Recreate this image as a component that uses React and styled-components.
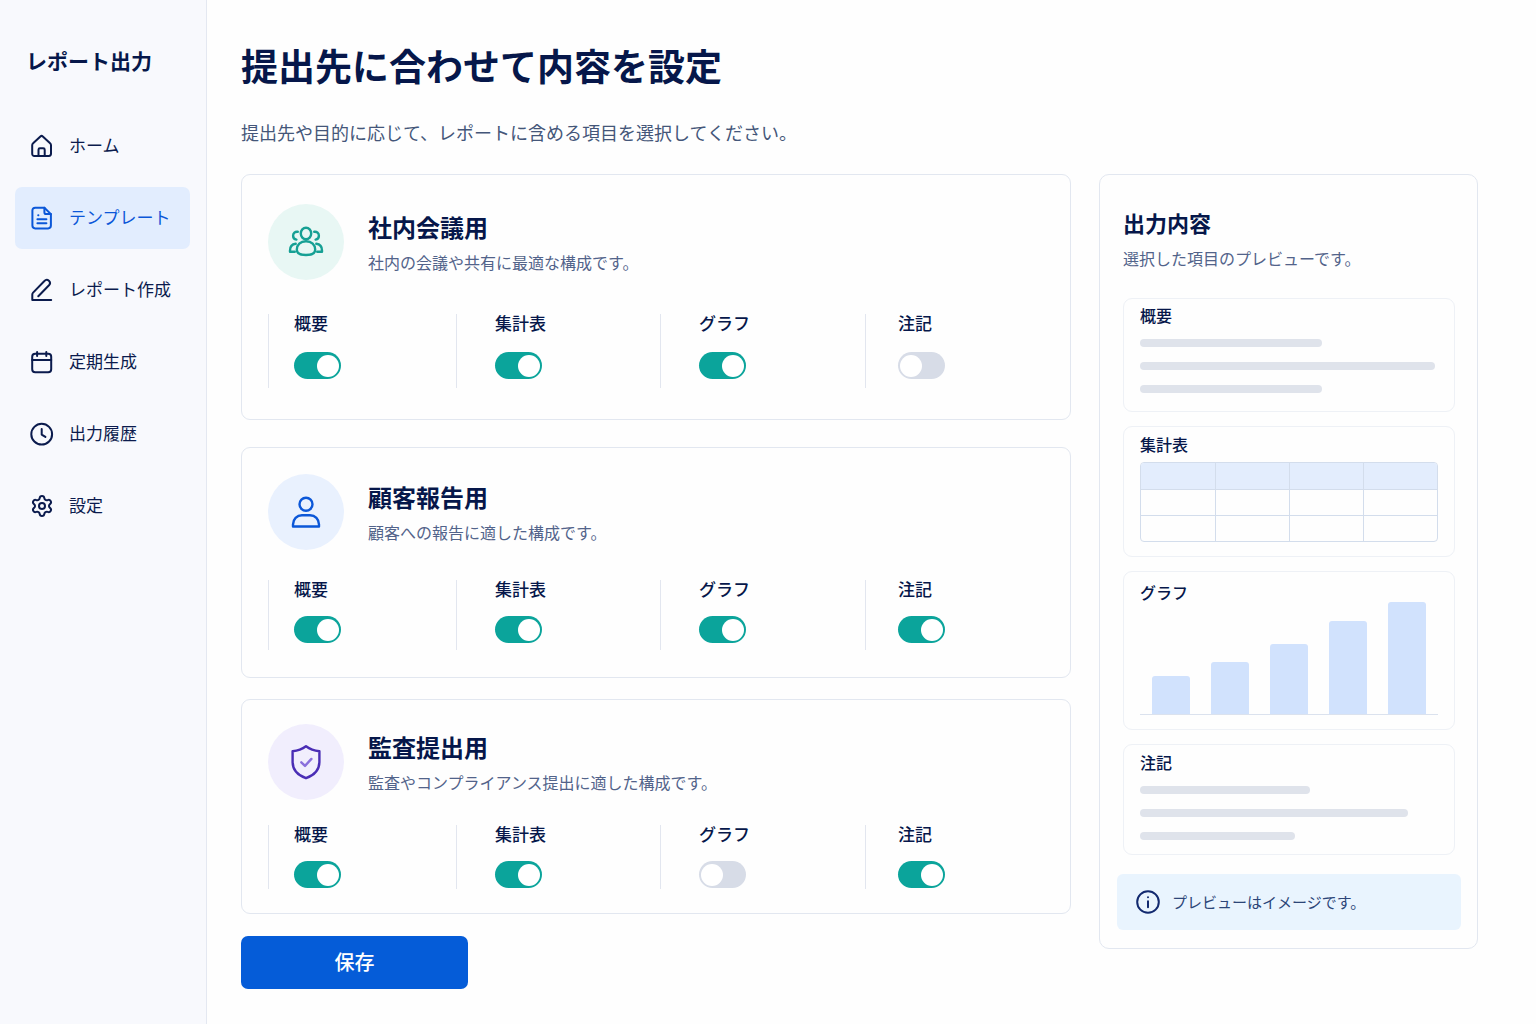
import React, { useState } from 'react';
import styled, { createGlobalStyle } from 'styled-components';
import { Settings } from 'lucide-react';

const GlobalStyle = createGlobalStyle`
  *, *::before, *::after {
    box-sizing: border-box;
  }

  body {
    margin: 0;
    background: #fefefe;
    color: #06174a;
    font-family: 'Noto Sans CJK JP', 'Noto Sans', sans-serif;
  }

  h1, h2, h3, p {
    margin: 0;
  }

  button, input {
    font: inherit;
  }
`;

const Layout = styled.div`
  display: flex;
  min-height: 100vh;
`;

const Sidebar = styled.aside`
  flex: 0 0 207px;
  padding: 44px 16px 32px 15px;
  background: #f8f9fd;
  border-right: 1px solid #e4e8f1;
`;

const Brand = styled.p`
  padding-left: 11px;
  font-size: 21px;
  line-height: 32px;
  font-weight: 700;
  white-space: nowrap;
`;

const Nav = styled.nav`
  display: flex;
  flex-direction: column;
  gap: 10px;
  margin-top: 39px;
`;

const NavLink = styled.a`
  display: flex;
  align-items: center;
  gap: 15px;
  height: 62px;
  padding-left: 15px;
  border-radius: 7px;
  font-size: 17px;
  line-height: 24px;
  white-space: nowrap;
  text-decoration: none;
  color: ${({ $active }) => ($active ? '#0b57d8' : '#0b1b4d')};
  background: ${({ $active }) => ($active ? '#e2edfe' : 'transparent')};

  svg {
    flex: none;
  }
`;

const NavText = styled.span`
  padding-bottom: 3px;
`;

const Main = styled.main`
  flex: 1;
  min-width: 0;
  padding: 38px 58px 32px 34px;
`;

const PageTitle = styled.h1`
  font-size: 37px;
  line-height: 54px;
  font-weight: 700;
`;

const PageLead = styled.p`
  margin-top: 26px;
  font-size: 18px;
  line-height: 28px;
  color: #445679;
`;

const Columns = styled.div`
  display: grid;
  grid-template-columns: minmax(0, 1fr) 379px;
  gap: 28px;
  align-items: start;
  margin-top: 28px;
`;

const TemplateForm = styled.form`
  display: flex;
  flex-direction: column;
`;

const density = {
  loose: { top: 29, gap: 34, row: 74, label: 20, bottom: 31, after: 27 },
  normal: { top: 26, gap: 30, row: 70, label: 18, bottom: 27, after: 21 },
  tight: { top: 24, gap: 25, row: 64, label: 18, bottom: 24, after: 22 },
};

const Card = styled.section`
  padding: ${({ $d }) => `${$d.top}px 26px ${$d.bottom}px`};
  margin-bottom: ${({ $d }) => $d.after}px;
  border: 1px solid #e2e7f0;
  border-radius: 9px;
`;

const CardHead = styled.div`
  display: flex;
  align-items: center;
  gap: 24px;
`;

const IconCircle = styled.div`
  display: grid;
  place-items: center;
  flex: none;
  width: 76px;
  height: 76px;
  border-radius: 50%;
  color: ${({ $color }) => $color};
  background: ${({ $background }) => $background};
`;

const CardTitle = styled.h2`
  margin-bottom: 7px;
  font-size: 24px;
  line-height: 32px;
  font-weight: 700;
`;

const Description = styled.p`
  font-size: 16px;
  line-height: 24px;
  color: #52638a;
`;

const Options = styled.div`
  display: grid;
  grid-template-columns: 188fr 204fr 205fr 179fr;
  margin-top: ${({ $d }) => $d.gap}px;
`;

const Option = styled.div`
  display: flex;
  flex-direction: column;
  align-items: flex-start;
  gap: ${({ $d }) => $d.label}px;
  height: ${({ $d }) => $d.row}px;
  border-left: 1px solid #e2e6ef;
  padding-left: 25px;

  &:nth-child(2),
  &:nth-child(3) {
    padding-left: 38px;
  }

  &:nth-child(4) {
    padding-left: 32px;
  }
`;

const OptionLabel = styled.label`
  font-size: 17px;
  line-height: 18px;
  font-weight: 500;
`;

const Switch = styled.input`
  appearance: none;
  display: flex;
  align-items: center;
  width: 47px;
  height: 27px;
  margin: 0;
  padding: 0 2px;
  border-radius: 14px;
  background: #d7dce7;
  cursor: pointer;

  &::before {
    content: '';
    width: 22px;
    height: 22px;
    border-radius: 50%;
    background: #fff;
  }

  &:checked {
    justify-content: flex-end;
    background: #0ba49b;
  }

  &:focus-visible {
    outline: 2px solid #0b57d8;
    outline-offset: 2px;
  }
`;

const SaveButton = styled.button`
  align-self: flex-start;
  width: 227px;
  height: 53px;
  padding: 0 0 2px;
  border: 0;
  border-radius: 7px;
  background: #055cd8;
  color: #fff;
  font-size: 20px;
  font-weight: 500;
  cursor: pointer;
`;

const Preview = styled.aside`
  padding: 30px 22px 18px 23px;
  border: 1px solid #e2e7f0;
  border-radius: 10px;
`;

const PreviewTitle = styled.h2`
  font-size: 22px;
  line-height: 34px;
  font-weight: 700;
`;

const PreviewLead = styled(Description)`
  margin-top: 7px;
`;

const Blocks = styled.div`
  display: flex;
  flex-direction: column;
  gap: 14px;
  margin-top: 28px;
`;

const Block = styled.section`
  padding: ${({ $top, $bottom }) => `${$top}px 16px ${$bottom}px`};
  border: 1px solid #eef1f6;
  border-radius: 9px;
`;

const BlockTitle = styled.h3`
  font-size: 16px;
  line-height: 20px;
  font-weight: 500;
`;

const Lines = styled.div`
  display: flex;
  flex-direction: column;
  gap: 15px;
  margin-top: 14px;
`;

const Line = styled.div`
  height: 8px;
  border-radius: 4px;
  background: #dfe3eb;
`;

const SampleTable = styled.table`
  width: 100%;
  margin-top: 8px;
  table-layout: fixed;
  border-collapse: separate;
  border-spacing: 0;
  border: 1px solid #d3ddec;
  border-radius: 4px;
  overflow: hidden;

  th, td {
    height: 26px;
    padding: 0;
  }

  th {
    background: #e3edfd;
  }

  td {
    border-top: 1px solid #d3ddec;
  }

  th + th, td + td {
    border-left: 1px solid #d3ddec;
  }
`;

const Chart = styled.div`
  display: flex;
  align-items: flex-end;
  justify-content: space-between;
  height: 113px;
  padding: 0 12px;
  border-bottom: 1px solid #dbe2ee;
`;

const Bar = styled.div`
  width: 38px;
  border-radius: 3px 3px 0 0;
  background: #d1e2fd;
`;

const Note = styled.div`
  display: flex;
  align-items: center;
  gap: 12px;
  height: 56px;
  margin: 19px -6px 0;
  padding-left: 19px;
  border-radius: 6px;
  background: #e9f4fe;
  color: #12296f;
`;

const NoteText = styled.p`
  font-size: 15px;
  line-height: 24px;
  color: #2c4578;
`;

const Icon = ({ size = 24, strokeWidth = 2, children }) => (
  <svg
    width={size}
    height={size}
    viewBox={`0 0 ${size} ${size}`}
    fill="none"
    stroke="currentColor"
    strokeWidth={strokeWidth}
    strokeLinecap="round"
    strokeLinejoin="round"
    aria-hidden="true"
  >
    {children}
  </svg>
);

const HomeIcon = () => (
  <Icon>
    <path d="M2.2 11.2c0-.8.3-1.4.9-1.9l7.3-6.9c.8-.7 1.6-.7 2.4 0l7.3 6.9c.6.5.9 1.1.9 1.9v8.6c0 1.3-.8 2.1-2.1 2.1H4.3c-1.3 0-2.1-.8-2.1-2.1z" />
    <path d="M8.5 21.9v-6.2c0-.9.6-1.4 1.4-1.4h3.4c.8 0 1.4.5 1.4 1.4v6.2" />
  </Icon>
);

const DocumentIcon = () => (
  <Icon>
    <path d="M14.4 1.8H5.2c-1.8 0-2.8 1-2.8 2.8v15c0 1.8 1 2.8 2.8 2.8h12.9c1.8 0 2.8-1 2.8-2.8V8.1z" />
    <path d="M14.4 1.8v4.4c0 1.2.7 1.9 1.9 1.9h4.6M8.2 9.2h.2M7.4 13.2h9M7.4 17.3h9" />
  </Icon>
);

const PenIcon = () => (
  <Icon>
    <path d="M21.2 22H2.3v-5.4c0-.8.2-1.4.8-2L14.4 3c1.300-1.400 3.100-1.500 4.500-.3 1.400 1.300 1.400 3.100.1 4.500L8.300 18.200" />
  </Icon>
);

const CalendarIcon = () => (
  <Icon>
    <rect x="2.2" y="3.8" width="19" height="18.400" rx="3" />
    <path d="M2.2 9.900h19M7.100 2v4M16.300 2v4" />
  </Icon>
);

const ClockIcon = () => (
  <Icon>
    <circle cx="11.7" cy="12.2" r="10.4" />
    <path d="M11.7 7v5.600l3.700 2.300" />
  </Icon>
);

const InfoIcon = () => (
  <Icon>
    <circle cx="12" cy="12" r="10.8" />
    <path d="M12 11.2v6M12 7.2v.1" />
  </Icon>
);

const GroupIcon = () => (
  <Icon size={36} strokeWidth={2.4}>
    <ellipse cx="18" cy="9.5" rx="5.2" ry="5.8" />
    <path d="M18 17.3c5.6 0 9.2 3.5 9.2 8.4 0 3.5-3.7 5.3-9.2 5.3s-9.2-1.8-9.2-5.3c0-4.9 3.6-8.4 9.2-8.4z" />
    <path d="M9.8 7.8C7 7.4 5.1 9.2 5.1 11.7c0 2 1.2 3.5 3.3 3.9M7.7 19.8C4.2 20.2 2 22.9 2 26.6v1.1h4.8" />
    <path d="M26.2 7.8c2.8-.4 4.7 1.4 4.7 3.9 0 2-1.2 3.5-3.3 3.9M28.3 19.8c3.5.4 5.7 3.1 5.7 6.8v1.1h-4.8" />
  </Icon>
);

const PersonIcon = () => (
  <Icon size={36} strokeWidth={2.4}>
    <circle cx="18" cy="10.3" r="6.5" />
    <path d="M5 32.500v-2c0-5.400 3.900-9.300 9-9.300h8c5.100 0 9 3.900 9 9.300v2z" />
  </Icon>
);

const ShieldIcon = () => (
  <Icon size={36} strokeWidth={2.4}>
    <path d="M18 2.2c4 3 8.4 4.5 13.4 5v10.6c0 7.8-4.700 13.300-13.400 16.400-8.700-3.100-13.400-8.600-13.400-16.400V7.200c5-.5 9.400-2 13.400-5z" />
    <path d="M13.300 18.300l3.700 3.600 6.400-7" stroke="#8a6fdc" />
  </Icon>
);

const NAV_ITEMS = [
  { label: 'ホーム', icon: HomeIcon },
  { label: 'テンプレート', icon: DocumentIcon, active: true },
  { label: 'レポート作成', icon: PenIcon },
  { label: '定期生成', icon: CalendarIcon },
  { label: '出力履歴', icon: ClockIcon },
  { label: '設定', icon: Settings },
];

const SECTIONS = [
  { key: 'summary', label: '概要' },
  { key: 'table', label: '集計表' },
  { key: 'chart', label: 'グラフ' },
  { key: 'notes', label: '注記' },
];

const TEMPLATES = [
  {
    id: 'meeting',
    title: '社内会議用',
    description: '社内の会議や共有に最適な構成です。',
    icon: GroupIcon,
    color: '#16a094',
    background: '#e8f7f4',
    spacing: density.loose,
  },
  {
    id: 'client',
    title: '顧客報告用',
    description: '顧客への報告に適した構成です。',
    icon: PersonIcon,
    color: '#0b57d8',
    background: '#e9f1fe',
    spacing: density.normal,
  },
  {
    id: 'audit',
    title: '監査提出用',
    description: '監査やコンプライアンス提出に適した構成です。',
    icon: ShieldIcon,
    color: '#4a2db5',
    background: '#f1eefd',
    spacing: density.tight,
  },
];

const INITIAL_SELECTION = {
  meeting: { summary: true, table: true, chart: true, notes: false },
  client: { summary: true, table: true, chart: true, notes: true },
  audit: { summary: true, table: true, chart: false, notes: true },
};

const SUMMARY_LINES = [61, 99, 61];
const NOTE_LINES = [57, 90, 52];
const BAR_HEIGHTS = [38, 52, 70, 93, 112];

const TemplateCard = ({ template, selection, onToggle }) => {
  const { id, title, description, icon: TemplateIcon, color, background, spacing } = template;

  return (
    <Card $d={spacing}>
      <CardHead>
        <IconCircle $color={color} $background={background}>
          <TemplateIcon />
        </IconCircle>
        <div>
          <CardTitle>{title}</CardTitle>
          <Description>{description}</Description>
        </div>
      </CardHead>
      <Options $d={spacing}>
        {SECTIONS.map(({ key, label }) => (
          <Option key={key} $d={spacing}>
            <OptionLabel htmlFor={`${id}-${key}`}>{label}</OptionLabel>
            <Switch
              id={`${id}-${key}`}
              type="checkbox"
              role="switch"
              checked={selection[key]}
              onChange={() => onToggle(id, key)}
            />
          </Option>
        ))}
      </Options>
    </Card>
  );
};

const PreviewPanel = () => (
  <Preview>
    <PreviewTitle>出力内容</PreviewTitle>
    <PreviewLead>選択した項目のプレビューです。</PreviewLead>
    <Blocks>
      <Block $top={6} $bottom={18}>
        <BlockTitle>概要</BlockTitle>
        <Lines>
          {SUMMARY_LINES.map((width, i) => (
            <Line key={i} style={{ width: `${width}%` }} />
          ))}
        </Lines>
      </Block>
      <Block $top={7} $bottom={14}>
        <BlockTitle>集計表</BlockTitle>
        <SampleTable>
          <thead>
            <tr>
              <th /><th /><th /><th />
            </tr>
          </thead>
          <tbody>
            <tr>
              <td /><td /><td /><td />
            </tr>
            <tr>
              <td /><td /><td /><td />
            </tr>
          </tbody>
        </SampleTable>
      </Block>
      <Block $top={10} $bottom={14}>
        <BlockTitle>グラフ</BlockTitle>
        <Chart>
          {BAR_HEIGHTS.map((height) => (
            <Bar key={height} style={{ height }} />
          ))}
        </Chart>
      </Block>
      <Block $top={7} $bottom={14}>
        <BlockTitle>注記</BlockTitle>
        <Lines>
          {NOTE_LINES.map((width, i) => (
            <Line key={i} style={{ width: `${width}%` }} />
          ))}
        </Lines>
      </Block>
    </Blocks>
    <Note>
      <InfoIcon />
      <NoteText>プレビューはイメージです。</NoteText>
    </Note>
  </Preview>
);

const App = () => {
  const [selections, setSelections] = useState(INITIAL_SELECTION);

  const handleToggle = (id, key) => {
    setSelections((prev) => ({
      ...prev,
      [id]: { ...prev[id], [key]: !prev[id][key] },
    }));
  };

  const handleSubmit = (e) => {
    e.preventDefault();
  };

  return (
    <>
      <GlobalStyle />
      <Layout>
        <Sidebar>
          <Brand>レポート出力</Brand>
          <Nav>
            {NAV_ITEMS.map(({ label, icon: NavIcon, active }) => (
              <NavLink key={label} href="#" $active={active} aria-current={active ? 'page' : undefined}>
                <NavIcon />
                <NavText>{label}</NavText>
              </NavLink>
            ))}
          </Nav>
        </Sidebar>
        <Main>
          <PageTitle>提出先に合わせて内容を設定</PageTitle>
          <PageLead>提出先や目的に応じて、レポートに含める項目を選択してください。</PageLead>
          <Columns>
            <TemplateForm onSubmit={handleSubmit}>
              {TEMPLATES.map((template) => (
                <TemplateCard
                  key={template.id}
                  template={template}
                  selection={selections[template.id]}
                  onToggle={handleToggle}
                />
              ))}
              <SaveButton type="submit">保存</SaveButton>
            </TemplateForm>
            <PreviewPanel />
          </Columns>
        </Main>
      </Layout>
    </>
  );
};

export default App;
